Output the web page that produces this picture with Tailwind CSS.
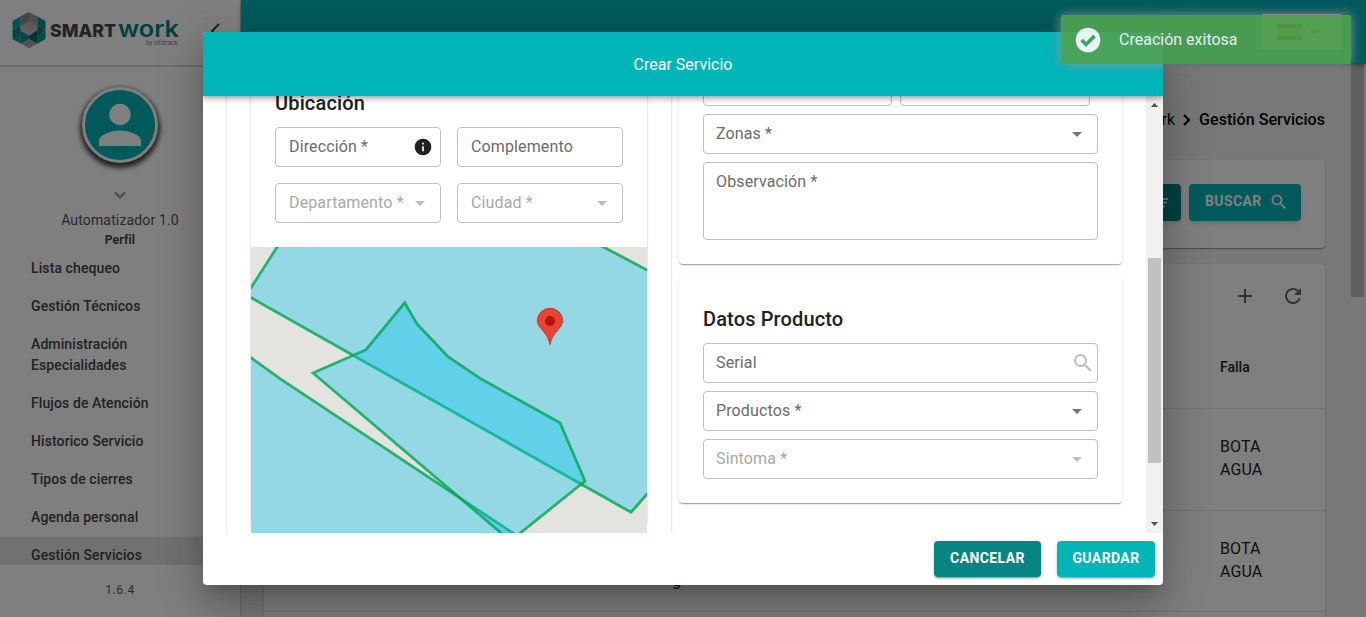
<!DOCTYPE html>
<html lang="es">
<head>
<meta charset="utf-8">
<title>Gestión Servicios</title>
<script src="https://cdn.jsdelivr.net/npm/@tailwindcss/browser@4"></script>
</head>
<body class="relative h-[617px] w-[1366px] overflow-hidden bg-[#f1f1f1] font-['Roboto',sans-serif]">

<!-- Application page -->
<div class="flex h-[617px] w-full overflow-hidden">
  <aside class="flex w-[241px] shrink-0 flex-col border-r border-[#d2d2d2] bg-white">
    <div class="flex h-[67px] shrink-0 items-center border-b-2 border-[#d8d8d8] pl-3">
      <svg class="mt-[-5px] h-[36px] w-[34px] shrink-0" viewBox="0 0 34 36">
        <path d="M17 0 25.500 4.500V31.500L17 36 8.500 31.500V4.500Z" fill="#9c9c9c"/>
        <path d="M17 0V9L8.500 14V4.500Z" fill="#8a8a8a"/>
        <path d="M17 9 25.500 14 17 18 8.500 14Z" fill="#b5b5b5"/>
        <path d="M17 18 25.500 14V19L17 24 8.500 19V14Z" fill="#bdbdbd"/>
        <path d="M8.500 4.500V14L.5 18V9Z" fill="#189ea5"/>
        <path d="M.5 18 8.500 14V24L.5 27Z" fill="#0c878b"/>
        <path d="M.5 27 8.500 22V31.500Z" fill="#18989c"/>
        <path d="M8.500 19 17 24V27L8.500 31.500Z" fill="#0b8f92"/>
        <path d="M25.500 18 17 24V27L25.500 31.500Z" fill="#00655d"/>
        <path d="M25.500 4.500 33.500 9V18L25.500 14Z" fill="#0a8d90"/>
        <path d="M25.500 14 33.500 18 25.500 24Z" fill="#007a72"/>
        <path d="M33.500 18V27L25.500 31.500V24Z" fill="#009484"/>
        <path d="M17 27 25.500 31.500 17 36 8.500 31.500Z" fill="#a5a5a5"/>
      </svg>
      <svg class="mt-[-3px] h-[38px] w-[138px] shrink-0" viewBox="46 12 138 38" font-family="Inter, sans-serif">
        <text x="50" y="37" font-size="18" font-weight="800" textLength="66" lengthAdjust="spacingAndGlyphs" fill="#474747">SMART</text>
        <text x="118" y="37" font-size="22.500" font-weight="600" textLength="61" lengthAdjust="spacingAndGlyphs" fill="#04827f">work</text>
        <text x="146" y="45" font-size="6.500" textLength="33" lengthAdjust="spacingAndGlyphs" fill="#777">by infotrack.</text>
      </svg>
      <svg class="ml-[21px] h-5 w-5" viewBox="0 0 20 20"><path d="M14 1 7 8l7 7" fill="none" stroke="#444" stroke-width="2"/></svg>
    </div>
    <div class="flex shrink-0 flex-col items-center pt-5">
      <div class="h-[76px] w-[76px] rounded-full border-[3px] border-white bg-[#00b5b8] shadow-[0_3px_5px_2px_rgba(0,0,0,0.75)]">
        <svg class="h-[70px] w-[70px]" viewBox="0 0 70 70" fill="#fff"><circle cx="35" cy="24.500" r="10.700"/><path d="M14 56V51C14 44 28 40.500 35 40.500S56 44 56 51V56Z"/></svg>
      </div>
      <svg class="mt-7 h-[9px] w-3" viewBox="0 0 12 9"><path d="m1 1.500 5 5 5-5" fill="none" stroke="#999" stroke-width="2"/></svg>
      <div class="mt-[10px] text-[14px] leading-5 tracking-[0.15px] text-[#555]">Automatizador 1.0</div>
      <div class="mt-px text-[12px] font-bold leading-[18px] tracking-[0.2px] text-[#444]">Perfil</div>
    </div>
    <nav class="flex shrink-0 flex-col text-[14px] font-medium leading-[21px] tracking-[0.1px] text-[#444]">
      <div class="px-[31px] pb-[17px] pt-[9px]">Lista chequeo</div>
      <div class="px-[31px] pb-[17px]">Gestión Técnicos</div>
      <div class="px-[31px] pb-[17px]">Administración<br>Especialidades</div>
      <div class="px-[31px] pb-[17px]">Flujos de Atención</div>
      <div class="px-[31px] pb-[17px]">Historico Servicio</div>
      <div class="px-[31px] pb-[17px]">Tipos de cierres</div>
      <div class="px-[31px] pb-[9px]">Agenda personal</div>
      <div class="h-[28px] overflow-hidden bg-[#e3e3e3] px-[31px] pt-[8px]">Gestión Servicios</div>
    </nav>
    <div class="pt-[15px] text-center text-[12px] leading-5 tracking-[0.6px] text-[#555]">1.6.4</div>
  </aside>

  <div class="flex min-w-0 flex-1 flex-col">
    <header class="relative z-10 flex h-16 shrink-0 items-start justify-end bg-[#00b5b8] pr-6 pt-[14px] shadow-[0_2px_4px_-1px_rgba(0,0,0,0.3),0_4px_5px_rgba(0,0,0,0.14)]">
      <div class="flex h-9 w-[81px] items-center gap-2 rounded bg-white pl-4">
        <div class="flex h-4 w-[25px] flex-col"><span class="h-1 bg-[#c60b1e]"></span><span class="h-2 bg-[#ffc400]"></span><span class="h-1 bg-[#c60b1e]"></span></div>
        <svg class="h-[5px] w-[9px]" viewBox="0 0 10 5"><path d="M0 0H10L5 5Z" fill="#333"/></svg>
      </div>
    </header>
    <div class="flex min-h-0 flex-1">
      <main class="flex flex-1 flex-col pl-[23px] pr-6">
        <div class="mt-[44px] flex h-6 items-center justify-end text-[16px] leading-6 text-black">
          <span>Smartwork</span>
          <svg class="mx-2 h-3 w-[8px]" viewBox="0 0 8 12"><path d="m1 1 5 5-5 5" fill="none" stroke="#000" stroke-width="2.200"/></svg>
          <span class="font-medium tracking-[0.06px]">Gestión Servicios</span>
        </div>
        <section class="mt-[28px] flex h-[88px] shrink-0 items-start justify-end gap-2 rounded bg-white pr-6 pt-6 shadow-[0_2px_1px_-1px_rgba(0,0,0,0.2),0_1px_1px_rgba(0,0,0,0.14),0_1px_3px_rgba(0,0,0,0.12)]">
          <div class="flex h-[37px] w-[112px] items-center justify-end rounded bg-[#078583] pr-[13px] shadow-md">
            <svg class="h-[10px] w-3" viewBox="0 0 12 10"><path d="M0 1H12M2 4.500H11M4 8.500H9" stroke="#fff" stroke-width="1.500"/></svg>
          </div>
          <div class="flex h-[37px] w-[112px] items-center rounded bg-[#00b5b8] pl-4 text-[14px] font-bold tracking-[0.4px] text-white shadow-md">
            <span class="mt-[-2px] w-[64px]">BUSCAR</span>
            <svg class="mt-[-2px] h-5 w-5" viewBox="0 0 24 24" fill="#fff"><path d="M15.500 14h-.79l-.28-.27A6.470 6.470 0 0 0 16 9.500 6.500 6.500 0 1 0 9.500 16c1.610 0 3.090-.59 4.230-1.570l.27.280v.79l5 4.990L20.490 19zm-6 0C7.010 14 5 11.990 5 9.500S7.010 5 9.500 5 14 7.010 14 9.500 11.990 14 9.500 14"/></svg>
          </div>
        </section>
        <section class="mt-4 flex flex-1 shrink-0 flex-col rounded-t bg-white text-[#1c1c1c] shadow-[0_1px_3px_rgba(0,0,0,0.2)]">
          <div class="flex h-[62px] shrink-0 items-center justify-end gap-6 pr-5 pt-[2px]">
            <svg class="h-6 w-6" viewBox="0 0 24 24" fill="#666"><path d="M19 13h-6v6h-2v-6H5v-2h6V5h2v6h6z"/></svg>
            <svg class="h-6 w-6" viewBox="0 0 24 24" fill="#666"><path d="M17.650 6.350A7.960 7.960 0 0 0 12 4a8 8 0 1 0 7.730 10h-2.080A6 6 0 1 1 12 6c1.660 0 3.140.69 4.220 1.780L13 11h7V4z"/></svg>
          </div>
          <div class="flex h-[83px] shrink-0 items-center border-b border-[#e0e0e0] pl-[956px] text-[14px] font-medium">Falla</div>
          <div class="flex h-[102px] shrink-0 items-center border-b border-[#e0e0e0] pl-[956px] pb-[3px] text-[16px] leading-[23px] tracking-[0.1px]">BOTA<br>AGUA</div>
          <div class="flex h-[101px] shrink-0 items-center border-b border-[#e0e0e0] pb-[3px] text-[16px] leading-[23px] tracking-[0.1px]"><span class="w-[956px] shrink-0 pl-[408px] pt-[42px]">g</span><span>BOTA<br>AGUA</span></div>
        </section>
      </main>
      <div class="w-[17px] shrink-0 bg-[#f1f1f1] px-[2px]"><div class="h-[233px] bg-[#c1c1c1]"></div></div>
    </div>
  </div>
</div>

<!-- Modal -->
<div class="absolute inset-0 z-20 flex items-start bg-black/50 pl-[203px] pt-8">
  <div class="flex h-[553px] w-[960px] flex-col overflow-hidden rounded bg-white shadow-[0_11px_15px_-7px_rgba(0,0,0,0.2),0_24px_38px_3px_rgba(0,0,0,0.14),0_9px_46px_8px_rgba(0,0,0,0.12)]">
    <div class="z-10 flex h-16 shrink-0 items-center justify-center bg-[#00b5b8] pt-[2px] text-[16px] text-white shadow-[0_2px_4px_-1px_rgba(0,0,0,0.2),0_4px_5px_rgba(0,0,0,0.14),0_1px_10px_rgba(0,0,0,0.12)]">Crear Servicio</div>
    <div class="flex h-[437px] shrink-0 overflow-hidden">
      <div class="flex min-w-0 flex-1 gap-2 pl-6">
        <div class="w-[444px] shrink-0 px-6 shadow-[0_0_2px_rgba(0,0,0,0.25)]">
          <div class="h-full shadow-[0_0_2px_rgba(0,0,0,0.25)]">
            <div class="mt-[-9px] flex flex-col px-6">
              <h2 class="mb-2 text-[20px] font-medium leading-8 tracking-[0.15px] text-[#212121]">Ubicación</h2>
              <div class="grid grid-cols-2 gap-4 text-[16px] tracking-[0.13px] text-[#6b6b6b]">
                <div class="flex h-10 items-center justify-between rounded border border-[#bfbfbf] pl-[13px] pr-[7px]"><span>Dirección *</span>
                  <svg class="h-5 w-5" viewBox="0 0 24 24" fill="#212121"><path d="M12 2a10 10 0 1 0 0 20 10 10 0 0 0 0-20m1 15h-2v-6h2zm0-8h-2V7h2z"/></svg></div>
                <div class="flex h-10 items-center rounded border border-[#bfbfbf] pl-[13px]">Complemento</div>
                <div class="flex h-10 items-center justify-between rounded border border-[#bfbfbf] pl-[13px] pr-[15px] text-[#a8a8a8]"><span>Departamento *</span><svg class="mt-px h-[5px] w-[10px]" viewBox="0 0 10 5"><path d="M0 0H10L5 5Z" fill="#bdbdbd"/></svg></div>
                <div class="flex h-10 items-center justify-between rounded border border-[#bfbfbf] pl-[13px] pr-[15px] text-[#a8a8a8]"><span>Ciudad *</span><svg class="mt-px h-[5px] w-[10px]" viewBox="0 0 10 5"><path d="M0 0H10L5 5Z" fill="#bdbdbd"/></svg></div>
              </div>
            </div>
            <svg class="mt-6 h-[286px] w-[396px]" viewBox="251 247 396 286">
              <rect x="251" y="247" width="396" height="286" fill="#e5e3df"/>
              <g fill="#00c3f0" fill-opacity=".35" stroke="#00a651" stroke-opacity=".8" stroke-width="2.800">
                <path d="M246.300 295 277.300 246.700 300 211 535 211 603 246.700 647 270 700 300V434L631 512.300Z"/>
                <path d="M200 321 251 357.700 280 378.700 513.300 533.300 560 564V620H200Z"/>
                <path d="M313 373 366 349.700 404.700 302.800 417 324 448.300 357 481.700 379.300 560 422.800 585 481 520 533.300 510.500 541 Z"/>
              </g>
              <path d="M550 344.800C548.500 337 545 333.500 541 328.500 538.500 325.500 537.300 323 537.300 320.700A12.700 12.400 0 0 1 562.700 320.700C562.700 323 561.500 325.500 559 328.500 555 333.500 551.500 337 550 344.800Z" fill="#ea4335" stroke="#c5221f" stroke-width=".8"/>
              <circle cx="550" cy="321" r="5" fill="#b31412"/>
            </svg>
          </div>
        </div>
        <div class="flex w-[443px] shrink-0 flex-col gap-[15px] text-[16px] tracking-[0.13px] text-[#6b6b6b]">
          <section class="mt-[-54px] flex h-[222px] shrink-0 flex-col gap-2 rounded px-6 pt-6 shadow-[0_2px_1px_-1px_rgba(0,0,0,0.2),0_1px_1px_rgba(0,0,0,0.14),0_1px_3px_rgba(0,0,0,0.12)]">
            <div class="flex h-10 shrink-0 gap-2"><div class="w-[189px] rounded border border-[#bfbfbf]"></div><div class="w-[190px] rounded border border-[#bfbfbf]"></div></div>
            <div class="flex h-10 shrink-0 items-center justify-between rounded border border-[#bfbfbf] pl-[12px] pr-[15px]"><span>Zonas *</span><svg class="mt-px h-[5px] w-[10px]" viewBox="0 0 10 5"><path d="M0 0H10L5 5Z" fill="#757575"/></svg></div>
            <div class="h-[78px] shrink-0 rounded border border-[#bfbfbf] pl-[12px] pt-[7px]">Observación *</div>
          </section>
          <section class="flex h-[224px] shrink-0 flex-col gap-2 rounded px-6 pt-6 shadow-[0_2px_1px_-1px_rgba(0,0,0,0.2),0_1px_1px_rgba(0,0,0,0.14),0_1px_3px_rgba(0,0,0,0.12)]">
            <h2 class="text-[20px] font-medium leading-8 tracking-[0.13px] text-[#212121]">Datos Producto</h2>
            <div class="flex h-10 shrink-0 items-center justify-between rounded border border-[#bfbfbf] pl-[12px] pr-[2px]"><span>Serial</span><svg class="h-6 w-6" viewBox="0 0 24 24" fill="#bdbdbd"><path d="M15.500 14h-.79l-.28-.27A6.470 6.470 0 0 0 16 9.500 6.500 6.500 0 1 0 9.500 16c1.610 0 3.090-.59 4.230-1.570l.27.280v.79l5 4.990L20.490 19zm-6 0C7.010 14 5 11.990 5 9.500S7.010 5 9.500 5 14 7.010 14 9.500 11.990 14 9.500 14"/></svg></div>
            <div class="flex h-10 shrink-0 items-center justify-between rounded border border-[#bfbfbf] pl-[12px] pr-[15px]"><span>Productos *</span><svg class="mt-px h-[5px] w-[10px]" viewBox="0 0 10 5"><path d="M0 0H10L5 5Z" fill="#757575"/></svg></div>
            <div class="flex h-10 shrink-0 items-center justify-between rounded border border-[#bfbfbf] pl-[12px] pr-[15px] text-[#a8a8a8]"><span>Sintoma *</span><svg class="mt-px h-[5px] w-[10px]" viewBox="0 0 10 5"><path d="M0 0H10L5 5Z" fill="#bdbdbd"/></svg></div>
          </section>
        </div>
      </div>
      <div class="flex w-[17px] shrink-0 flex-col items-center justify-between bg-[#f1f1f1] py-[7px]">
        <svg class="h-1 w-[7px]" viewBox="0 0 7 4"><path d="M0 4 3.500 0 7 4Z" fill="#505050"/></svg>
        <div class="mt-[91px] h-[205px] w-[13px] bg-[#c1c1c1]"></div>
        <svg class="h-1 w-[7px]" viewBox="0 0 7 4"><path d="M0 0H7L3.500 4Z" fill="#505050"/></svg>
      </div>
    </div>
    <div class="flex h-[52px] items-center justify-end gap-4 pr-2 text-[14px] font-bold tracking-[0.4px] text-white">
      <div class="flex h-9 w-[107px] items-center justify-center rounded bg-[#078583] pb-[2px] shadow-[0_3px_1px_-2px_rgba(0,0,0,0.2),0_2px_2px_rgba(0,0,0,0.14),0_1px_5px_rgba(0,0,0,0.12)]">CANCELAR</div>
      <div class="flex h-9 w-[98px] items-center justify-center rounded bg-[#00b5b8] pb-[2px] shadow-[0_3px_1px_-2px_rgba(0,0,0,0.2),0_2px_2px_rgba(0,0,0,0.14),0_1px_5px_rgba(0,0,0,0.12)]">GUARDAR</div>
    </div>
  </div>
</div>

<!-- Notification -->
<div class="absolute left-[1061px] top-[15px] z-30 flex h-[49px] w-[290px] items-center rounded-[2px] bg-[#51a351] pl-[14px] text-[16px] text-white opacity-90 shadow-[0_0_12px_#999]">
  <svg class="h-[26px] w-[26px]" viewBox="0 0 26 26"><circle cx="13" cy="13" r="12.300" fill="#fff"/><path d="m6.500 13 4.500 4.500 8.500-8.500" fill="none" stroke="#4ba055" stroke-width="3.600"/></svg>
  <span class="ml-[18px]">Creación exitosa</span>
</div>
</body>
</html>
